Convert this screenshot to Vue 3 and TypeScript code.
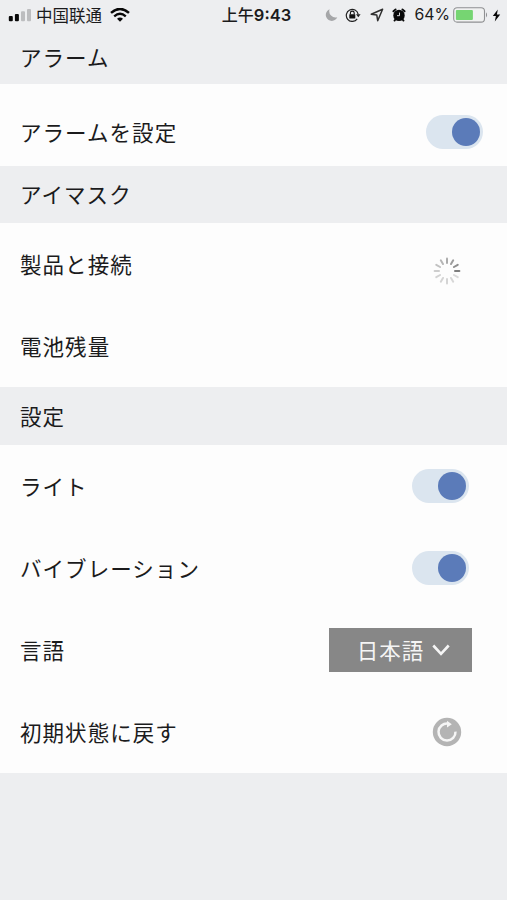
<script setup lang="ts">
import { ref } from 'vue'

const alarm = ref(true)
const light = ref(true)
const vibration = ref(true)
const language = ref('日本語')

const spokes = Array.from({ length: 12 }, (_, i) => ({
  angle: i * 30,
  shade: [0.5, 0.14, 0.15, 0.16, 0.16, 0.17, 0.19, 0.23, 0.28, 0.32, 0.38, 0.44][i],
}))
</script>

<template>
  <main class="screen">
    <div class="status">
      <div class="carrier">
        <svg class="signal" width="24" height="14" viewBox="0 0 24 14">
          <rect x="0.8" y="8" width="4" height="5.2" rx="1" fill="#080808" />
          <rect x="6.9" y="6" width="4" height="7.2" rx="1" fill="#080808" />
          <rect x="13" y="3.2" width="4" height="10" rx="1" fill="#bcbdbf" />
          <rect x="19" y="1" width="4" height="12.2" rx="1" fill="#bcbdbf" />
        </svg>
        <span class="network">中国联通</span>
        <svg class="wifi" width="20" height="14" viewBox="0 0 20 14">
          <path d="M1 4.9Q10-3 19 4.9" fill="none" stroke="#080808" stroke-width="2.5" />
          <path d="M4.2 8.3Q10 3.4 15.8 8.3" fill="none" stroke="#080808" stroke-width="2.4" />
          <path d="M7 10.7Q10 8.3 13 10.7L10 13.7Z" fill="#080808" />
        </svg>
      </div>
      <span class="time"><span class="period">上午</span>9:43</span>
      <div class="indicators">
        <svg class="moon" width="13" height="14" viewBox="0 0 13 14">
          <path d="M4.6 1.3A6 6 0 1 0 12.3 9.3A6.3 6.3 0 0 1 4.6 1.3Z" fill="#a5a6a8" />
        </svg>
        <svg class="lock" width="16" height="14" viewBox="0 0 16 14">
          <path d="M12.2 10.9A6 6 0 1 1 13.2 6.3" fill="none" stroke="#222" stroke-width="1.2" />
          <path d="M11 6.2H15.6L13.3 9.2Z" fill="#222" />
          <rect x="4.3" y="6.2" width="6" height="4.4" rx="0.6" fill="#111" />
          <path d="M5.4 6.4V5A1.9 1.9 0 0 1 9.2 5V6.4" fill="none" stroke="#111" stroke-width="1.1" />
        </svg>
        <svg class="location" width="14" height="14" viewBox="0 0 14 14">
          <path d="M12.6 1.2L1.2 6.2L6.8 7.1L7.7 12.7Z" fill="none" stroke="#303030" stroke-width="1.5" stroke-linejoin="round" />
        </svg>
        <svg class="clock" width="14" height="14" viewBox="0 0 14 14">
          <circle cx="7" cy="7.4" r="5.7" fill="#080808" />
          <path d="M1.4 3.3L3.6 1.4M12.6 3.3L10.4 1.4M3.4 11.5L2.5 12.6M10.6 11.5L11.5 12.6" stroke="#080808" stroke-width="1.9" stroke-linecap="round" />
          <path d="M7.5 4.6V7.7H5" fill="none" stroke="#edeef0" stroke-width="0.9" />
        </svg>
        <span class="percent">64%</span>
        <svg class="battery" width="36" height="16" viewBox="0 0 36 16">
          <rect x="0.7" y="0.7" width="30.8" height="14.4" rx="3.4" fill="#f0f1f1" stroke="#8f9092" stroke-width="1.1" />
          <rect x="2.9" y="2.9" width="17" height="10" rx="1" fill="#76d572" />
          <path d="M33 5.2Q35.2 7.9 33 10.6Z" fill="#8f9092" />
        </svg>
        <svg class="bolt" width="9" height="13" viewBox="0 0 9 13">
          <path d="M5.8 0.5L0.8 7.1H3.9L2.8 12.5L8.2 5.4H4.9Z" fill="#080808" />
        </svg>
      </div>
    </div>

    <h2 class="heading first">アラーム</h2>
    <section class="group">
      <div class="row alarm">
        <span class="label">アラームを設定</span>
        <button class="toggle" :class="{ on: alarm }" role="switch" :aria-checked="alarm" @click="alarm = !alarm"><i></i></button>
      </div>
    </section>

    <h2 class="heading mask">アイマスク</h2>
    <section class="group">
      <div class="row">
        <span class="label">製品と接続</span>
        <svg class="spinner" width="28" height="28" viewBox="-14 -14 28 28">
          <line
            v-for="s in spokes" :key="s.angle" x1="8" y1="0" x2="12.4" y2="0"
            stroke="#000" stroke-width="2" stroke-linecap="round"
            :stroke-opacity="s.shade" :transform="`rotate(${s.angle})`"
          />
        </svg>
      </div>
      <div class="row"><span class="label">電池残量</span></div>
    </section>

    <h2 class="heading settings">設定</h2>
    <section class="group">
      <div class="row">
        <span class="label">ライト</span>
        <button class="toggle" :class="{ on: light }" role="switch" :aria-checked="light" @click="light = !light"><i></i></button>
      </div>
      <div class="row">
        <span class="label">バイブレーション</span>
        <button class="toggle" :class="{ on: vibration }" role="switch" :aria-checked="vibration" @click="vibration = !vibration"><i></i></button>
      </div>
      <div class="row">
        <span class="label">言語</span>
        <button class="select">
          <span class="label">{{ language }}</span>
          <svg width="20" height="14" viewBox="0 0 20 14">
            <path d="M2.3 2.5L10 10.8L17.7 2.5" fill="none" stroke="#f5f5f5" stroke-width="2.6" />
          </svg>
        </button>
      </div>
      <div class="row">
        <span class="label">初期状態に戻す</span>
        <button class="reset">
          <svg width="30" height="30" viewBox="0 0 30 30">
            <circle cx="15" cy="15" r="14.2" fill="#b4b4b4" />
            <path d="M16 6.6A8.5 8.5 0 1 0 23.5 14.6" fill="none" stroke="#f6f6f6" stroke-width="2.5" />
            <path d="M15 3.8L19.8 7.2L15 10.6Z" fill="#f6f6f6" />
          </svg>
        </button>
      </div>
    </section>
  </main>
</template>

<style>
body {
  background: #edeef0;
}
</style>

<style scoped>
.screen {
  min-height: 900px;
  background: #edeef0;
  color: #1b1b1c;
  font-family: "Noto Sans CJK JP", "Liberation Sans", sans-serif;
  font-size: 21.5px;
  letter-spacing: 1.05px;
}
.status {
  display: grid;
  grid-template-columns: 1fr auto 1fr;
  align-items: center;
  box-sizing: border-box;
  height: 30px;
  padding: 0 6px 0 8px;
  letter-spacing: 0;
}
.carrier, .indicators {
  display: flex;
  align-items: center;
}
.indicators {
  justify-content: flex-end;
}
svg {
  display: block;
  flex: none;
}
.network {
  margin-left: 4px;
  font-family: "Noto Sans CJK SC", sans-serif;
  font-size: 16.5px;
  line-height: 30px;
}
.wifi {
  margin-left: 8px;
}
.time {
  padding-left: 4px;
  font-family: Inter, "Noto Sans CJK SC", sans-serif;
  font-size: 16.5px;
  font-weight: 600;
  line-height: 30px;
}
.period {
  font-size: 16px;
  font-weight: 500;
}
.lock {
  margin-left: 7px;
}
.location {
  margin-left: 9px;
}
.clock {
  margin-left: 8px;
}
.percent {
  margin-left: 8px;
  font-family: Inter, sans-serif;
  font-size: 15.8px;
  line-height: 30px;
}
.battery {
  margin-left: 3px;
}
.bolt {
  margin-left: 3px;
}
.heading {
  display: flex;
  align-items: center;
  box-sizing: border-box;
  margin: 0;
  padding: 0 20px 2px;
  font-size: inherit;
  font-weight: 400;
}
.first {
  height: 54px;
}
.mask {
  height: 57px;
}
.settings {
  height: 58px;
}
.group {
  background: #fdfdfd;
}
.row {
  display: flex;
  align-items: center;
  justify-content: space-between;
  box-sizing: border-box;
  height: 82px;
  padding: 0 38px 0 20px;
}
.alarm {
  padding: 14px 24px 0 20px;
}
.label {
  padding-bottom: 1px;
}
button {
  padding: 0;
  border: 0;
  background: none;
  color: inherit;
  font: inherit;
  letter-spacing: inherit;
}
.toggle {
  display: flex;
  align-items: center;
  width: 57px;
  height: 34px;
  padding: 0 3px;
  border-radius: 17px;
  background: #e1e3e6;
}
.toggle.on {
  justify-content: flex-end;
  background: #dbe5ef;
}
.toggle i {
  width: 28.5px;
  height: 28.5px;
  border-radius: 50%;
  background: #5b7bb9;
}
.spinner {
  margin: 14px 8px 0 0;
}
.select {
  display: flex;
  align-items: center;
  justify-content: center;
  gap: 7px;
  width: 143px;
  height: 44px;
  margin-right: -3px;
  padding-left: 7px;
  background: #878787;
  color: #f5f5f5;
}
.reset {
  margin-right: 7px;
}
</style>
